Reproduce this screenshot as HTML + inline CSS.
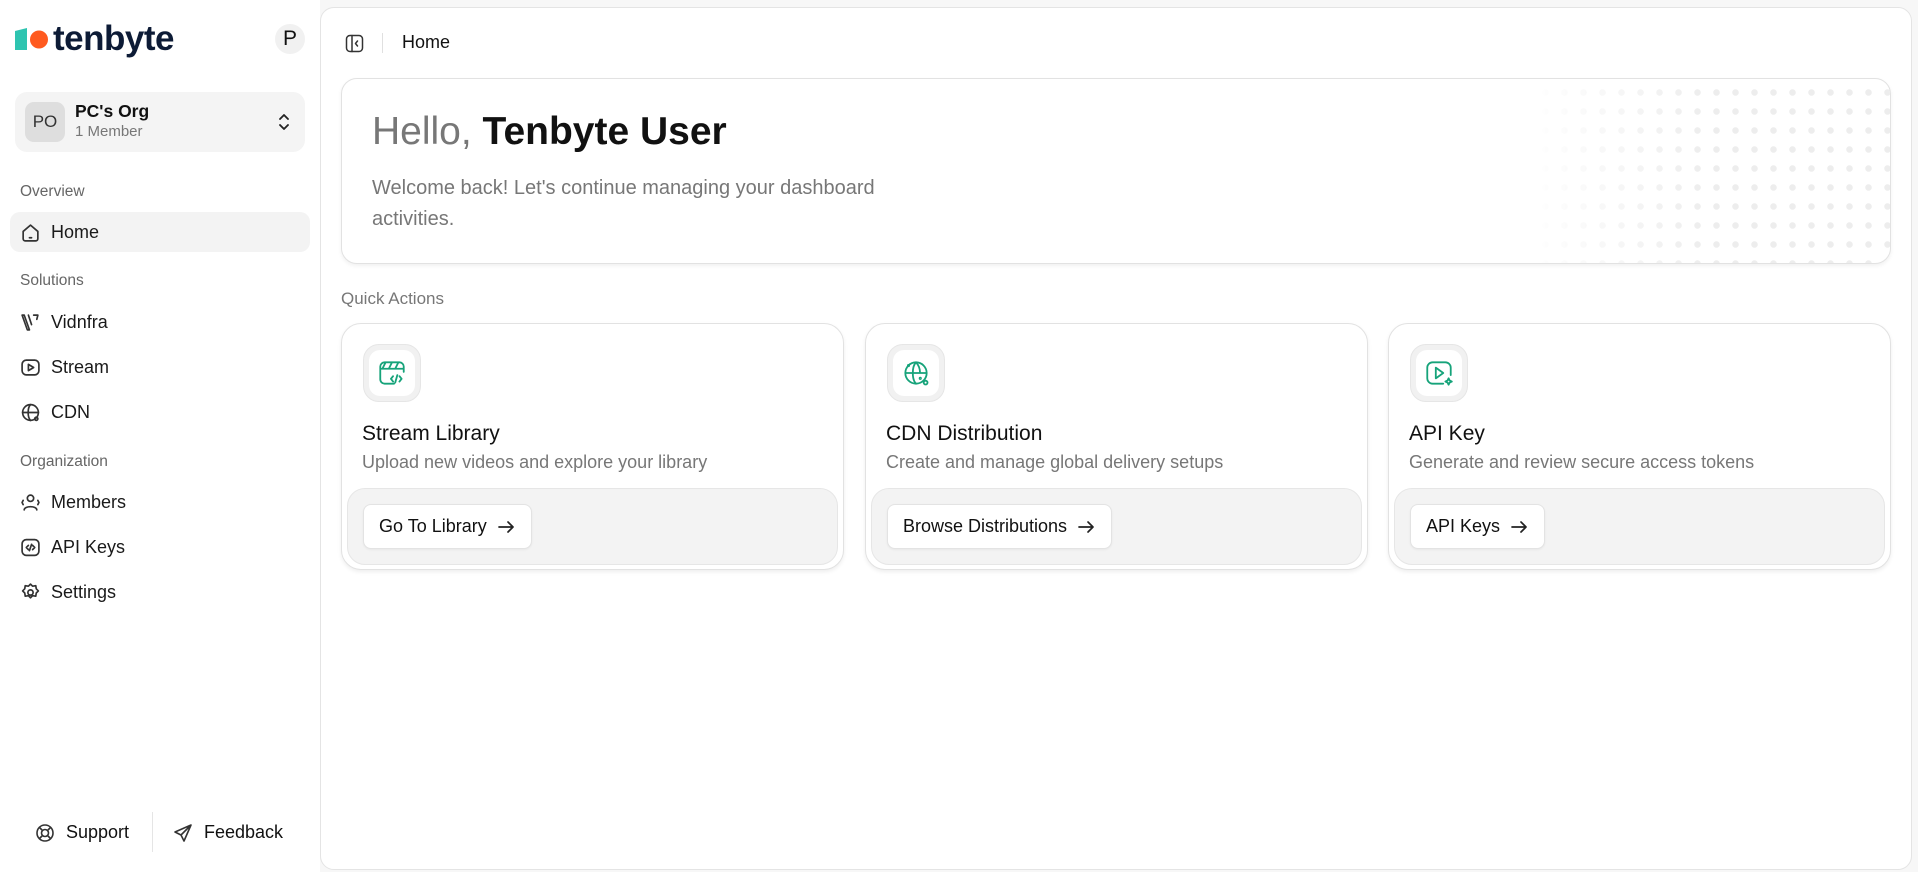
<!DOCTYPE html>
<html><head><meta charset="utf-8"><style>
*{box-sizing:border-box;margin:0;padding:0}
body{width:1918px;height:872px;background:#f7f7f7;font-family:"Liberation Sans",Arial,sans-serif;color:#111;position:relative;overflow:hidden}
.side{position:absolute;left:0;top:0;width:320px;height:872px;background:#fff}
.abs{position:absolute}
.lbl{position:absolute;left:20px;font-size:15.5px;color:#666}
.item{position:absolute;left:10px;width:300px;height:40px;border-radius:10px;display:flex;align-items:center;padding-left:10px;font-size:18px;color:#1a1a1a}
.item svg{width:21px;height:21px;margin-right:10px;fill:none;stroke:#333;stroke-width:1.6;stroke-linecap:round;stroke-linejoin:round}
.main{position:absolute;left:320px;top:7px;width:1592px;height:863px;background:#fff;border:1px solid #e4e4e4;border-radius:14px}
.hello{position:absolute;left:341px;top:78px;width:1550px;height:186px;border:1.5px solid #e2e2e2;border-radius:16px;box-shadow:0 2px 4px rgba(0,0,0,.06);overflow:hidden;background:#fff}
.dots{position:absolute;right:0;top:0;width:360px;height:186px;background-image:radial-gradient(circle,#ededed 3px,transparent 3.5px);background-size:19px 19px;background-position:6px 4px;-webkit-mask-image:linear-gradient(to right,transparent,#000 50%);mask-image:linear-gradient(to right,transparent,#000 50%)}
.card{position:absolute;top:323px;width:503px;height:247px;border:1.5px solid #e2e2e2;border-radius:20px;box-shadow:0 2px 4px rgba(0,0,0,.07);background:#fff}
.ib{position:absolute;left:21px;top:20px;width:58px;height:58px;border-radius:16px;background:#f1f1f1;border:1px solid #e6e6e6;display:flex;align-items:center;justify-content:center}
.ib div{width:46px;height:46px;border-radius:11px;background:#fff;display:flex;align-items:center;justify-content:center}
.ib svg{width:32px;height:32px;fill:none;stroke:#16a37a;stroke-width:1.7;stroke-linecap:round;stroke-linejoin:round}
.ct{position:absolute;left:20px;top:98px;font-size:21px;color:#111}
.cd{position:absolute;left:20px;top:128px;font-size:18px;color:#777}
.ft{position:absolute;left:5px;top:164px;width:491px;height:77px;background:#f3f3f3;border:1px solid #e6e6e6;border-radius:18px}
.btn{position:absolute;left:15px;top:15px;height:45px;background:#fff;border:1px solid #e3e3e3;border-radius:8px;display:flex;align-items:center;padding:0 15px 0 15px;font-size:18px;color:#111;box-shadow:0 1px 2px rgba(0,0,0,.05)}
.btn svg{width:20px;height:20px;margin-left:9px;fill:none;stroke:#222;stroke-width:1.7;stroke-linecap:round;stroke-linejoin:round}
</style></head><body>
<div class="side">
 <div class="abs" style="left:15px;top:25px;display:flex;align-items:center">
  <svg width="34" height="24" viewBox="0 0 34 24"><path d="M0 4 L12 1 L12 23 L0 23Z" fill="#2ec4b0"/><circle cx="24" cy="12.5" r="9" fill="#ff5a1f"/></svg>
  <span style="font-size:35px;font-weight:bold;color:#0d1b36;letter-spacing:-0.5px;margin-left:4px;line-height:28px">tenbyte</span>
 </div>
 <div class="abs" style="left:275px;top:24px;width:30px;height:30px;border-radius:50%;background:#f1f1f1;font-size:21px;text-align:center;line-height:30px">P</div>
 <div class="abs" style="left:15px;top:92px;width:290px;height:60px;border-radius:12px;background:#f4f4f4">
  <div class="abs" style="left:10px;top:10px;width:40px;height:40px;border-radius:9px;background:#dedede;font-size:17px;color:#333;text-align:center;line-height:40px">PO</div>
  <div class="abs" style="left:60px;top:9px;font-size:17.5px;font-weight:bold">PC's Org</div>
  <div class="abs" style="left:60px;top:31px;font-size:15px;color:#777">1 Member</div>
  <svg class="abs" style="left:262px;top:20px" width="14" height="20" viewBox="0 0 14 20" fill="none" stroke="#222" stroke-width="1.8" stroke-linecap="round" stroke-linejoin="round"><path d="M3 7l4-4 4 4M3 13l4 4 4-4"/></svg>
 </div>
 <div class="lbl" style="top:183px">Overview</div>
 <div class="item" style="top:212px;background:#f3f3f3"><svg viewBox="0 0 20 20"><path d="M3 9l7-6 7 6v7a2 2 0 0 1-2 2H5a2 2 0 0 1-2-2z"/><path d="M9 15h2"/></svg>Home</div>
 <div class="lbl" style="top:272px">Solutions</div>
 <div class="item" style="top:302px"><svg viewBox="0 0 20 20"><path d="M2 3l5 14h2L4 3zM8 3l3 9M13 3h4l-1 4"/></svg>Vidnfra</div>
 <div class="item" style="top:347px"><svg viewBox="0 0 20 20"><rect x="2" y="3" width="16" height="14" rx="4"/><path d="M8 7v6l5-3z"/></svg>Stream</div>
 <div class="item" style="top:392px"><svg viewBox="0 0 20 20"><circle cx="10" cy="10" r="7.5"/><path d="M2.5 10h15M10 2.5c-3 3-3 12 0 15"/><circle cx="15.5" cy="16" r="1.5"/></svg>CDN</div>
 <div class="lbl" style="top:453px">Organization</div>
 <div class="item" style="top:482px"><svg viewBox="0 0 20 20"><circle cx="10" cy="6" r="3"/><path d="M4 17c0-4 12-4 12 0M3 8l-1 2 1 2M17 8l1 2-1 2"/></svg>Members</div>
 <div class="item" style="top:527px"><svg viewBox="0 0 20 20"><rect x="2" y="2.5" width="16" height="15" rx="4"/><path d="M8 8l-2 2 2 2M12 8l2 2-2 2M11 7l-2 6"/></svg>API Keys</div>
 <div class="item" style="top:572px"><svg viewBox="0 0 20 20"><circle cx="10" cy="10" r="2.5"/><path d="M10 2l2 2 3-.5.5 3 2 2-2 2-.5 3-3-.5-2 2-2-2-3 .5-.5-3-2-2 2-2 .5-3 3 .5z"/></svg>Settings</div>
 <div class="abs" style="left:35px;top:822px;font-size:18px;display:flex;align-items:center"><svg width="20" height="20" viewBox="0 0 20 20" fill="none" stroke="#333" stroke-width="1.6" style="margin-right:11px"><circle cx="10" cy="10" r="8"/><circle cx="10" cy="10" r="3.5"/><path d="M4.5 4.5l3 3M15.5 4.5l-3 3M4.5 15.5l3-3M15.5 15.5l-3-3"/></svg>Support</div>
 <div class="abs" style="left:152px;top:812px;width:1px;height:40px;background:#e5e5e5"></div>
 <div class="abs" style="left:173px;top:822px;font-size:18px;display:flex;align-items:center"><svg width="20" height="20" viewBox="0 0 20 20" fill="none" stroke="#333" stroke-width="1.6" stroke-linejoin="round" style="margin-right:11px"><path d="M18 2L2 9l6 3 3 6zM18 2L8 12"/></svg>Feedback</div>
</div>
<div class="main"></div>
<svg class="abs" style="left:345px;top:34px" width="19" height="19" viewBox="0 0 19 19" fill="none" stroke="#333" stroke-width="1.5" stroke-linecap="round" stroke-linejoin="round"><rect x="1.5" y="1.5" width="16" height="16" rx="3.5"/><path d="M7 1.5v16M12.5 7l-2 2.5 2 2.5"/></svg>
<div class="abs" style="left:382px;top:33px;width:1px;height:20px;background:#e0e0e0"></div>
<div class="abs" style="left:402px;top:32px;font-size:18px">Home</div>
<div class="hello"><div class="dots"></div>
 <div class="abs" style="left:30px;top:31px;font-size:39px;color:#777">Hello, <b style="color:#111">Tenbyte User</b></div>
 <div class="abs" style="left:30px;top:94px;font-size:20px;color:#777;line-height:31px;width:560px">Welcome back! Let's continue managing your dashboard activities.</div>
</div>
<div class="abs" style="left:341px;top:289px;font-size:17px;color:#777">Quick Actions</div>
<div class="card" style="left:341px"><div class="ib"><div><svg viewBox="0 0 30 30"><path d="M17 25H8a4 4 0 0 1-4-4V9a4 4 0 0 1 4-4h14a4 4 0 0 1 4 4v5M4 11h22M9 5l-3 6M15 5l-3 6M21 5l-3 6M16 18l-2 2.5 2 2.5M22 18l2 2.5-2 2.5M20 17l-2 7"/></svg></div></div>
 <div class="ct">Stream Library</div><div class="cd">Upload new videos and explore your library</div>
 <div class="ft"><div class="btn">Go To Library<svg viewBox="0 0 20 20"><path d="M3 10h14M12 5l5 5-5 5"/></svg></div></div></div>
<div class="card" style="left:865px"><div class="ib"><div><svg viewBox="0 0 30 30"><circle cx="15" cy="15" r="10"/><path d="M5 15h20M15 5c-4 4-4 16 0 20M15 5c3 3 3.8 7 3.8 10"/><circle cx="24" cy="24" r="1.8"/><circle cx="8" cy="8" r=".6"/><circle cx="19" cy="20" r=".6"/></svg></div></div>
 <div class="ct">CDN Distribution</div><div class="cd">Create and manage global delivery setups</div>
 <div class="ft"><div class="btn">Browse Distributions<svg viewBox="0 0 20 20"><path d="M3 10h14M12 5l5 5-5 5"/></svg></div></div></div>
<div class="card" style="left:1388px"><div class="ib"><div><svg viewBox="0 0 30 30"><path d="M19 25H9a5 5 0 0 1-5-5V10a5 5 0 0 1 5-5h12a5 5 0 0 1 5 5v7"/><path d="M12 10v10l7-5z"/><path d="M24 20l1 2 2 1-2 1-1 2-1-2-2-1 2-1z"/></svg></div></div>
 <div class="ct">API Key</div><div class="cd">Generate and review secure access tokens</div>
 <div class="ft"><div class="btn">API Keys<svg viewBox="0 0 20 20"><path d="M3 10h14M12 5l5 5-5 5"/></svg></div></div></div>
</body></html>
